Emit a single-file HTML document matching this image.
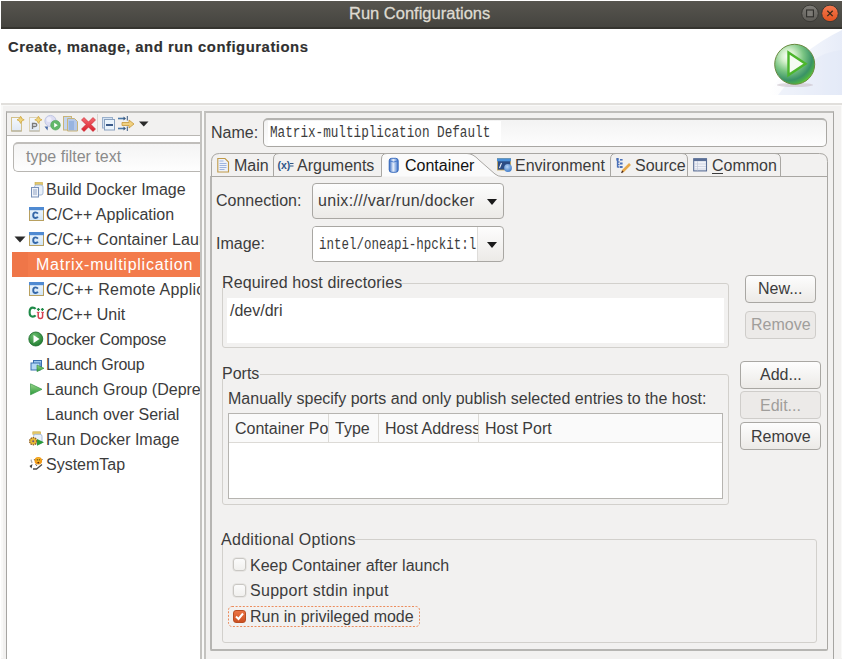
<!DOCTYPE html>
<html><head><meta charset="utf-8">
<style>
*{margin:0;padding:0;box-sizing:border-box}
html,body{width:843px;height:660px;overflow:hidden;background:#fff}
body{position:relative;font-family:"Liberation Sans",sans-serif;font-size:16px;color:#3c3c3c}
.a{position:absolute}
.t{position:absolute;white-space:pre;line-height:18px;height:18px}
.m{font-family:"Liberation Mono",monospace}
.hl{position:absolute;background:#c9c7c3}
.btn{position:absolute;border:1px solid #a9a7a3;border-radius:4px;background:linear-gradient(#fdfdfd,#eceae7)}
.dis{border-color:#cfcdca;background:#eceae8}
.grp{position:absolute;border:1px solid #d2d0cc;border-radius:3px}
.cb{position:absolute;width:13px;height:13px;border:1px solid #c9c7c3;border-radius:3px;background:linear-gradient(#fbfbfb,#f1f0ee);box-shadow:0 0 0 0.5px #dcdad6}
</style></head>
<body>
<div class="a" style="left:1px;top:1px;width:841px;height:658px;background:#f2f1f0"></div>
<div class="hl" style="left:1px;top:105px;width:2px;height:553px;background:#f9f9f8"></div>
<div class="hl" style="left:841px;top:105px;width:1px;height:553px;background:#f9f9f8"></div>

<!-- title bar -->
<div class="a" style="left:1px;top:1px;width:841px;height:28px;background:linear-gradient(#57554f,#45443f 92%,#35342f 92%)"></div>
<div class="t" style="left:349px;top:4px;color:#dfdbd2;font-size:16.5px;-webkit-text-stroke:0.3px #dfdbd2">Run Configurations</div>
<svg class="a" style="left:800px;top:3px" width="42" height="22" viewBox="0 0 42 22">
  <defs>
    <linearGradient id="gb" x1="0" y1="0" x2="0" y2="1"><stop offset="0" stop-color="#807e79"/><stop offset="1" stop-color="#5e5c57"/></linearGradient>
    <linearGradient id="rb" x1="0" y1="0" x2="0" y2="1"><stop offset="0" stop-color="#f47a52"/><stop offset="1" stop-color="#e2521e"/></linearGradient>
  </defs>
  <circle cx="10" cy="10.4" r="8.3" fill="url(#gb)" stroke="#3a3935" stroke-width="1"/>
  <rect x="6.6" y="7" width="6.8" height="6.8" fill="#7c7a75" stroke="#2f2e2b" stroke-width="1.1"/>
  <circle cx="30" cy="10.4" r="8.3" fill="url(#rb)" stroke="#3a3935" stroke-width="1"/>
  <path d="M27.3 7.7 L32.7 13.1 M32.7 7.7 L27.3 13.1" stroke="#3a2a1a" stroke-width="1.3"/>
</svg>

<!-- header -->
<div class="a" style="left:1px;top:29px;width:841px;height:74px;background:#fff"></div>
<div class="t" style="left:8px;top:38px;font-size:14px;font-weight:bold;color:#303030;-webkit-text-stroke:0.15px #303030;letter-spacing:0.5px;transform:scaleX(1.06);transform-origin:0 0">Create, manage, and run configurations</div>
<svg class="a" style="left:770px;top:30px" width="72" height="65" viewBox="0 0 72 65">
  <defs>
    <linearGradient id="bg1" x1="0" y1="0" x2="1" y2="0"><stop offset="0" stop-color="#fff"/><stop offset="1" stop-color="#dfe6f6"/></linearGradient>
    <radialGradient id="pg" cx="0.34" cy="0.3" r="0.75"><stop offset="0" stop-color="#ffffff"/><stop offset="0.22" stop-color="#d4f0cc"/><stop offset="0.5" stop-color="#7cc684"/><stop offset="0.8" stop-color="#3a9266"/><stop offset="0.93" stop-color="#4aae4a"/><stop offset="1" stop-color="#66cc30"/></radialGradient>
  </defs>
  <path d="M0 65 L0 60 Q30 20 72 0 L72 65 Z" fill="url(#bg1)" opacity="0.75"/>
  <path d="M8 65 Q40 22 72 20 L72 65 Z" fill="#dfe6f6" opacity="0.45"/>
  <ellipse cx="25" cy="55" rx="18" ry="2" fill="#c9c0c8" opacity="0.6"/>
  <circle cx="24.7" cy="34.3" r="20" fill="url(#pg)" stroke="#6a8a40" stroke-width="1"/>
  <path d="M18.5 22.5 L35.5 33.8 L18.5 45 Z" fill="#f4fbf2" stroke="#4cb62c" stroke-width="2.4" stroke-linejoin="miter"/>
</svg>
<div class="hl" style="left:1px;top:103px;width:841px;height:2px;background:#e1dfdc"></div>
<div class="hl" style="left:1px;top:105px;width:841px;height:1px;background:#f9f9f8"></div>

<!-- left panel -->
<div class="a" style="left:6px;top:111px;width:196px;height:548px;border-left:1px solid #a6a5a2;border-top:2px solid #c2c1be;border-right:2px solid #c4c3c0;background:#fff"></div>
<div class="hl" style="left:202px;top:111px;width:2px;height:548px;background:#f9f9f8"></div>
<div class="a" style="left:7px;top:113px;width:193px;height:22px;background:#f2f1f0"></div>
<div class="hl" style="left:7px;top:135px;width:193px;height:1px;background:#b9b7b3"></div>
<div class="a" style="left:13px;top:142px;width:187px;height:30px;border:1px solid #b8b6b2;border-top:2px solid #c0bebb;border-right:none;border-radius:5px 0 0 5px;background:linear-gradient(#f4f4f4,#fefefe)"></div>
<div class="t" style="left:26px;top:148px;color:#8b8b8b">type filter text</div>

<!-- tree -->
<div class="a" style="left:12px;top:252px;width:188px;height:25px;background:#f37b4c"></div>
<div class="a" style="left:12px;top:252px;width:16px;height:25px;background:#ef7648"></div>
<div class="t" style="left:46px;top:181px">Build Docker Image</div>
<div class="t" style="left:46px;top:206px">C/C++ Application</div>
<div class="a" style="left:7px;top:228px;width:193px;height:25px;overflow:hidden"><div class="t" style="left:39px;top:3px;letter-spacing:0.1px">C/C++ Container Launcher</div></div>
<div class="t" style="left:36px;top:256px;color:#fff;letter-spacing:0.75px">Matrix-multiplication</div>
<div class="a" style="left:7px;top:278px;width:193px;height:25px;overflow:hidden"><div class="t" style="left:39px;top:3px;letter-spacing:0.25px">C/C++ Remote Application</div></div>
<div class="t" style="left:46px;top:306px">C/C++ Unit</div>
<div class="t" style="left:46px;top:331px;letter-spacing:-0.25px">Docker Compose</div>
<div class="t" style="left:46px;top:356px;letter-spacing:-0.25px">Launch Group</div>
<div class="a" style="left:7px;top:378px;width:193px;height:25px;overflow:hidden"><div class="t" style="left:39px;top:3px;letter-spacing:0px">Launch Group (Deprecated)</div></div>
<div class="t" style="left:46px;top:406px">Launch over Serial</div>
<div class="t" style="left:46px;top:431px">Run Docker Image</div>
<div class="t" style="left:46px;top:456px">SystemTap</div>

<!-- right panel -->
<div class="a" style="left:204px;top:111px;width:630px;height:548px;border-left:2px solid #c4c3c0;border-top:2px solid #bfbebb;border-right:1px solid #a6a5a2;background:#f2f1f0"></div>
<div class="t" style="left:211px;top:124px">Name:</div>
<div class="a" style="left:263px;top:118px;width:564px;height:29px;border:1px solid #a9a7a3;border-top:2px solid #b4b3b0;border-radius:5px;background:linear-gradient(#f3f3f3,#fdfdfd)"></div>
<div class="a" style="left:268px;top:121px;width:233px;height:24px;background:#fff"></div>
<div class="t m" style="left:270px;top:124px;font-size:16px;color:#3c3c3c;transform:scaleX(0.791);transform-origin:0 0">Matrix-multiplication Default</div>

<!-- tab folder -->
<div class="a" style="left:210px;top:176px;width:618px;height:475px;border:1px solid #a9a7a3;border-left:2px solid #b6b5b2;border-bottom:2px solid #b6b5b2;border-top:none;border-radius:0 0 2px 2px"></div>
<svg class="a" style="left:205px;top:148px" width="628" height="36" viewBox="0 0 628 36">
  <!-- strip outline -->
  <path d="M6.5 28.5 L6.5 13.5 Q6.5 5.5 14.5 5.5 L614.5 5.5 Q622.5 5.5 622.5 13.5 L622.5 28.5" fill="none" stroke="#a9a7a3"/>
  <!-- bottom line (excluding selected) -->
  <path d="M6.5 28.5 L176.5 28.5 M296 28.5 L622.5 28.5" fill="none" stroke="#a9a7a3"/>
  <!-- selected tab fill -->
  <path d="M176.5 28.5 L176.5 11 Q176.5 5.5 182 5.5 L262 5.5 Q268 5.5 274 12 L290 26 Q293 28.5 297 28.5 Z" fill="#fbfbfb"/>
  <path d="M176.5 28.5 L176.5 11 Q176.5 5.5 182 5.5 L262 5.5 Q268 5.5 274 12 L290 26 Q293 28.5 297 28.5" fill="none" stroke="#a9a7a3"/>
  <!-- separators -->
  <path d="M68.5 28.5 L68.5 11 Q68.5 5.5 74 5.5" fill="none" stroke="#a9a7a3"/>
  <path d="M405.5 28.5 L405.5 11 Q405.5 5.5 411 5.5" fill="none" stroke="#a9a7a3"/>
  <path d="M482.5 28.5 L482.5 11 Q482.5 5.5 477 5.5" fill="none" stroke="#a9a7a3"/>
  <path d="M575.5 28.5 L575.5 11 Q575.5 5.5 570 5.5" fill="none" stroke="#a9a7a3"/>
</svg>
<div class="t" style="left:234px;top:157px">Main</div>
<div class="t" style="left:297px;top:157px">Arguments</div>
<div class="t" style="left:405px;top:157px;color:#111">Container</div>
<div class="t" style="left:515px;top:157px">Environment</div>
<div class="t" style="left:635px;top:157px">Source</div>
<div class="t" style="left:712px;top:157px">Common</div>
<div class="hl" style="left:712px;top:173px;width:11px;height:1px;background:#3c3c3c"></div>

<!-- connection / image -->
<div class="t" style="left:216px;top:192px">Connection:</div>
<div class="btn" style="left:312px;top:183px;width:192px;height:36px"></div>
<div class="t" style="left:318px;top:192px;letter-spacing:0.33px">unix:///var/run/docker</div>
<svg class="a" style="left:487px;top:199px" width="10" height="6"><path d="M0 0 L10 0 L5 6 Z" fill="#1a1a1a"/></svg>
<div class="t" style="left:216px;top:235px">Image:</div>
<div class="btn" style="left:312px;top:226px;width:192px;height:36px"></div>
<div class="a" style="left:313px;top:227px;width:165px;height:34px;background:#fff;border-radius:3px 0 0 3px"></div>
<div class="hl" style="left:477px;top:227px;width:1px;height:34px;background:#dedcd9"></div>
<div class="t m" style="left:319px;top:236px;font-size:16px;transform:scaleX(0.78);transform-origin:0 0">intel/oneapi-hpckit:l</div>
<svg class="a" style="left:487px;top:242px" width="10" height="6"><path d="M0 0 L10 0 L5 6 Z" fill="#1a1a1a"/></svg>

<!-- required host dirs -->
<div class="grp" style="left:222px;top:283px;width:507px;height:65px"></div>
<div class="a" style="left:221px;top:272px;width:180px;height:16px;background:#f2f1f0"></div>
<div class="t" style="left:222px;top:274px;letter-spacing:0.1px">Required host directories</div>
<div class="a" style="left:227px;top:298px;width:497px;height:45px;background:#fff"></div>
<div class="t" style="left:230px;top:302px">/dev/dri</div>
<div class="btn" style="left:745px;top:275px;width:71px;height:28px"></div>
<div class="t" style="left:758px;top:280px">New...</div>
<div class="btn dis" style="left:745px;top:311px;width:71px;height:28px"></div>
<div class="t" style="left:751px;top:316px;color:#a09e9b">Remove</div>

<!-- ports -->
<div class="grp" style="left:222px;top:374px;width:507px;height:131px"></div>
<div class="a" style="left:221px;top:363px;width:39px;height:16px;background:#f2f1f0"></div>
<div class="t" style="left:222px;top:365px">Ports</div>
<div class="t" style="left:228px;top:390px">Manually specify ports and only publish selected entries to the host:</div>
<div class="a" style="left:228px;top:413px;width:495px;height:86px;border:1px solid #b6b4b0;background:#fff"></div>
<div class="a" style="left:229px;top:414px;width:493px;height:29px;background:#fafafa"></div>
<div class="hl" style="left:229px;top:442px;width:493px;height:1px;background:#dcdad6"></div>
<div class="hl" style="left:328px;top:414px;width:1px;height:29px;background:#dcdad6"></div>
<div class="hl" style="left:378px;top:414px;width:1px;height:29px;background:#dcdad6"></div>
<div class="hl" style="left:478px;top:414px;width:1px;height:29px;background:#dcdad6"></div>
<div class="a" style="left:229px;top:415px;width:99px;height:29px;overflow:hidden"><div class="t" style="left:6px;top:5px">Container Port</div></div>
<div class="t" style="left:335px;top:420px">Type</div>
<div class="a" style="left:379px;top:415px;width:99px;height:29px;overflow:hidden"><div class="t" style="left:6px;top:5px">Host Address</div></div>
<div class="t" style="left:485px;top:420px">Host Port</div>
<div class="btn" style="left:740px;top:361px;width:81px;height:28px"></div>
<div class="t" style="left:760px;top:366px">Add...</div>
<div class="btn dis" style="left:740px;top:391px;width:81px;height:28px"></div>
<div class="t" style="left:760px;top:397px;color:#a09e9b">Edit...</div>
<div class="btn" style="left:740px;top:422px;width:81px;height:28px"></div>
<div class="t" style="left:751px;top:428px">Remove</div>

<!-- additional options -->
<div class="grp" style="left:222px;top:539px;width:595px;height:104px"></div>
<div class="a" style="left:221px;top:528px;width:134px;height:16px;background:#f2f1f0"></div>
<div class="t" style="left:221px;top:531px;letter-spacing:0.28px">Additional Options</div>
<div class="cb" style="left:233px;top:558px"></div>
<div class="t" style="left:250px;top:557px">Keep Container after launch</div>
<div class="cb" style="left:233px;top:584px"></div>
<div class="t" style="left:250px;top:582px;letter-spacing:0.28px">Support stdin input</div>
<svg class="a" style="left:227px;top:605px" width="194" height="23"><rect x="1.5" y="1.5" width="191" height="20" rx="3.5" fill="none" stroke="#ec8c5c" stroke-width="1" stroke-dasharray="2 1.6"/></svg>
<div class="cb" style="left:233px;top:610px;background:linear-gradient(#ec7444,#cc5022);border-color:#b84c22;box-shadow:none"></div>
<svg class="a" style="left:233px;top:610px" width="13" height="13"><path d="M3 6.5 L5.5 9 L10 3.5" fill="none" stroke="#fff" stroke-width="2"/></svg>
<div class="t" style="left:250px;top:608px">Run in privileged mode</div>

<!-- ICONS -->
<svg class="a" style="left:0;top:0" width="843" height="660" viewBox="0 0 843 660">
<defs>
 <linearGradient id="pgF" x1="0" y1="0" x2="0" y2="1"><stop offset="0" stop-color="#f4f8fc"/><stop offset="1" stop-color="#dfe8f4"/></linearGradient>
 <linearGradient id="winF" x1="0" y1="0" x2="0" y2="1"><stop offset="0" stop-color="#f0f8ff"/><stop offset="1" stop-color="#cfe4f6"/></linearGradient>
 <linearGradient id="redX" x1="0" y1="0" x2="0" y2="1"><stop offset="0" stop-color="#f46a70"/><stop offset="1" stop-color="#d8202c"/></linearGradient>
 <linearGradient id="grT" x1="0" y1="0" x2="0" y2="1"><stop offset="0" stop-color="#9ad48a"/><stop offset="1" stop-color="#2a9a3a"/></linearGradient>
 <linearGradient id="cyl" x1="0" y1="0" x2="1" y2="0"><stop offset="0" stop-color="#3066c0"/><stop offset="0.45" stop-color="#e8f0fc"/><stop offset="1" stop-color="#3a70c8"/></linearGradient>
 <radialGradient id="ball" cx="0.4" cy="0.35" r="0.7"><stop offset="0" stop-color="#b8d4f4"/><stop offset="1" stop-color="#3a78c8"/></radialGradient>
 <radialGradient id="dcG" cx="0.4" cy="0.3" r="0.75"><stop offset="0" stop-color="#6cc070"/><stop offset="1" stop-color="#1e7a2e"/></radialGradient>
</defs>
<!-- toolbar -->
<g>
 <!-- new doc -->
 <rect x="11.5" y="117.5" width="10" height="13.5" fill="url(#pgF)" stroke="#d2c08a"/>
 <path d="M11.5 131 L21.5 131" stroke="#a8a89a"/>
 <path d="M20.6 116.2 Q21.2 119.2 24.2 119.8 Q21.2 120.4 20.6 123.4 Q20 120.4 17 119.8 Q20 119.2 20.6 116.2 Z" fill="#f0d478" stroke="#d4ae50" stroke-width="0.9"/>
 <!-- P doc -->
 <rect x="29.5" y="117.5" width="10" height="13.5" fill="url(#pgF)" stroke="#dcd2b4"/>
 <path d="M29.5 131 L39.5 131" stroke="#b0b0a8"/>
 <path d="M32.5 129 L32.5 123.5 L35 123.5 Q36.8 123.5 36.8 125 Q36.8 126.5 35 126.5 L32.5 126.5" fill="none" stroke="#7a7a7a" stroke-width="1.3"/>
 <path d="M38.4 116.2 Q39 119.2 42 119.8 Q39 120.4 38.4 123.4 Q37.8 120.4 34.8 119.8 Q37.8 119.2 38.4 116.2 Z" fill="#f0d478" stroke="#d4ae50" stroke-width="0.9"/>
 <!-- globe run -->
 <circle cx="50.5" cy="121" r="5.6" fill="#dcdcf2" stroke="#c0c8e4" stroke-width="1"/>
 <circle cx="49" cy="119.5" r="2.5" fill="#eeeefa"/>
 <path d="M44.5 126.5 L48 126.5 L47.5 130.5 Z" fill="#4a6aa8"/>
 <circle cx="55.5" cy="125.2" r="4.8" fill="#62b86a" stroke="#4aa052" stroke-width="0.6"/>
 <path d="M54.2 122.8 L57.8 125.2 L54.2 127.6 Z" fill="#fff"/>
 <!-- copy -->
 <rect x="63.5" y="116.5" width="8" height="13.5" fill="#c4d4ee" stroke="#c8b478"/>
 <path d="M67.5 118.5 L74.5 118.5 L77.5 121.5 L77.5 131 L67.5 131 Z" fill="#b4c8ea" stroke="#c8b478"/>
 <rect x="69" y="121" width="5" height="9" fill="#98b4e0"/>
 <!-- red x -->
 <path d="M84 117.5 L88.5 122 L93 117.5 L95.5 120 L91 124.5 L95.5 129 L93 131.5 L88.5 127 L84 131.5 L81.5 129 L86 124.5 L81.5 120 Z" fill="url(#redX)" stroke="#c81e28" stroke-width="0.6"/>
 <!-- separator -->
 <path d="M97.5 114 L97.5 132" stroke="#d8d6d2"/>
 <!-- collapse -->
 <rect x="102.5" y="117.5" width="10" height="10.5" fill="#d4e2f2" stroke="#9ab0cc"/>
 <rect x="104.5" y="119.5" width="10" height="10.5" fill="#eaf4fc" stroke="#8aa2c0"/>
 <rect x="106" y="124" width="7" height="2" fill="#3a5a88"/>
 <!-- filter arrows -->
 <path d="M118 118.5 L124.5 118.5" stroke="#4a78a8" stroke-width="1.6"/><path d="M123.5 116.5 L126 118.5 L123.5 120.5 Z" fill="#3a5a80"/>
 <path d="M118 128.5 L124.5 128.5" stroke="#4a78a8" stroke-width="1.6"/><path d="M123.5 126.5 L126 128.5 L123.5 130.5 Z" fill="#3a5a80"/>
 <path d="M127.3 116 L127.3 120.5 M127.3 126.5 L127.3 131" stroke="#3a5a80" stroke-width="1"/>
 <path d="M122 122.5 L129 122.5 L129 120 L134 124 L129 128 L129 125.5 L122 125.5 Z" fill="#f0d080" stroke="#c89838" stroke-width="0.8"/>
 <!-- dropdown -->
 <path d="M139 121.5 L148.5 121.5 L143.75 126.5 Z" fill="#2a2a2a"/>
</g>
<!-- tree icons -->
<g>
 <!-- build docker image: jar + doc -->
 <rect x="35" y="182.5" width="7.5" height="2.5" fill="#e4c868" stroke="#c8a848" stroke-width="0.6"/>
 <rect x="34.5" y="185" width="8.5" height="10" rx="2" fill="#e8f0fa" stroke="#a8bcd8"/>
 <rect x="31.5" y="187.5" width="7" height="9.5" fill="#f0f4fa" stroke="#7890b8"/>
 <path d="M33 190 L37 190 M33 192 L37 192 M33 194 L37 194" stroke="#7890b8" stroke-width="0.8"/>
 <!-- ▼ expand -->
 <path d="M14.5 236.5 L25.5 236.5 L20 242.5 Z" fill="#2a2a2a"/>
</g>
<g id="cwin">
 <rect x="29.5" y="207.5" width="14" height="13" fill="url(#winF)" stroke="#b8a060"/>
 <rect x="29" y="207" width="15" height="3.2" fill="#4f8ad2"/>
 <path d="M37.9 213.6 Q37 212.4 35.6 212.4 Q33.2 212.4 33.2 215.2 Q33.2 218 35.6 218 Q37 218 37.9 216.8" fill="none" stroke="#3467a8" stroke-width="1.9"/>
</g>
<use href="#cwin" x="0" y="25"/>
<use href="#cwin" x="0" y="75"/>
<!-- c/c++ unit -->
<path d="M35.6 308.8 Q34.6 307.6 32.8 307.6 Q29.6 307.6 29.6 312.2 Q29.6 316.6 32.8 316.6 Q34.6 316.6 35.6 315.4" fill="none" stroke="#1f8a48" stroke-width="2.1"/>
<path d="M36.9 309.4 L39.9 309.4 M38.4 307.9 L38.4 310.9 M40.9 309.4 L43.9 309.4 M42.4 307.9 L42.4 310.9" stroke="#1f8a48" stroke-width="1.2"/>
<path d="M36.8 312.3 L39.6 312.3 M41.2 312.3 L44 312.3" stroke="#d84050" stroke-width="1"/>
<path d="M38.2 312.3 L38.2 316.2 Q38.2 318.5 40.4 318.5 Q42.6 318.5 42.6 316.2 L42.6 312.3" fill="none" stroke="#d84050" stroke-width="1.5"/>
<!-- docker compose -->
<circle cx="35.8" cy="339" r="7" fill="url(#dcG)" stroke="#1a6a2a" stroke-width="0.8"/>
<path d="M33.5 335 L39.5 339 L33.5 343 Z" fill="#fff"/>
<!-- launch group -->
<rect x="33.5" y="360.5" width="8" height="6.5" fill="#9cc8ee" stroke="#3a70b0"/>
<rect x="31" y="363" width="9" height="7" fill="#b4d8f4" stroke="#3a70b0"/>
<path d="M37 365 L44 368.3 L37 371.6 Z" fill="url(#grT)" stroke="#2a8a3a" stroke-width="0.6"/>
<!-- launch group deprecated -->
<path d="M30.5 383.8 L42 389.3 L30.5 394.8 Z" fill="url(#grT)" stroke="#3a9a48" stroke-width="0.7"/>
<!-- run docker image -->
<rect x="32.8" y="431.8" width="7.8" height="2.5" fill="#e4c868" stroke="#c8a848" stroke-width="0.6"/>
<rect x="33.5" y="434.3" width="8.5" height="9.5" rx="2" fill="#e8f0fa" stroke="#a8bcd8"/>
<circle cx="33.2" cy="441.2" r="3.6" fill="#e8b838" stroke="#8a5a28" stroke-width="1.2" stroke-dasharray="1.4 0.9"/>
<circle cx="33.2" cy="441.2" r="1" fill="#6a5a7a"/>
<path d="M37 439 L44 442.3 L37 445.7 Z" fill="#2a9a3a"/>
<!-- systemtap -->
<path d="M29.5 466 L31.5 468.5 L32.5 464 Z" fill="#3a3a3a"/>
<path d="M31 459.5 L32 463" stroke="#b0b0b0" stroke-width="1.2"/>
<path d="M33 469 L36.5 469 L42 464.5" fill="none" stroke="#4a4a4a" stroke-width="1.3"/>
<path d="M34 459 L35.5 461 M42.5 459 L41 461 M35.5 464 L37 466" stroke="#6a6a6a" stroke-width="1"/>
<circle cx="38.3" cy="460.8" r="3.8" fill="#f29a18"/>
<circle cx="38.3" cy="460" r="2.2" fill="#f8c030" opacity="0.8"/>
<path d="M37.3 459 L37.3 460.6 M39.3 459 L39.3 460.6" stroke="#6a4a10" stroke-width="0.9"/>
<circle cx="38.3" cy="462.6" r="0.9" fill="#5a2a08"/>
<!-- tab icons -->
<g>
 <path d="M217.8 158.5 L225 158.5 L228.5 162 L228.5 172 L217.8 172 Z" fill="#eef2fa" stroke="#c09a48" stroke-width="1.1"/>
 <path d="M219.5 161 L223.5 161 M219.5 163.5 L226.5 163.5 M219.5 165.5 L226.5 165.5 M219.5 167.5 L226.5 167.5 M219.5 169.5 L224.5 169.5" stroke="#8aa4d8" stroke-width="0.8"/>
 <!-- arguments (x)= -->
 <text x="277.5" y="169" font-family="Liberation Sans" font-weight="bold" font-size="10.5" fill="#2f5686">(x)</text>
 <path d="M290 163.5 L293.5 163.5 M290 166 L293.5 166" stroke="#2f5686" stroke-width="1.1"/>
 <!-- container cylinder -->
 <rect x="389.2" y="158.3" width="9" height="14" rx="2.5" fill="url(#cyl)" stroke="#2e62b8" stroke-width="0.9"/>
 <path d="M390 161 Q393.7 163 397.5 161" fill="none" stroke="#3a70c8" stroke-width="0.8"/>
 <!-- environment -->
 <rect x="497.5" y="158.5" width="13" height="11.5" fill="#2c4c84" stroke="#c8a858" stroke-width="0.8"/>
 <rect x="497" y="158.3" width="14" height="3" fill="#4a90d8"/>
 <path d="M499.5 168 L501.5 163" stroke="#e8f0fa" stroke-width="1.1"/>
 <circle cx="508" cy="168" r="3.9" fill="url(#ball)"/>
 <!-- source -->
 <path d="M617.5 159 L617.5 167.5 M617.5 162 L619.5 162 M617.5 164.5 L619.5 164.5 M617.5 167 L619.5 167" stroke="#4a70b8" stroke-width="1.3"/>
 <rect x="616.3" y="158" width="2.4" height="2.6" fill="#4a70b8"/>
 <rect x="620" y="159" width="2.6" height="1.6" fill="#4a70b8"/>
 <rect x="620" y="162.5" width="2.6" height="2" fill="#4a70b8"/>
 <rect x="620" y="166" width="2.6" height="2" fill="#4a70b8"/>
 <path d="M622.5 171.5 L630 164" stroke="#e8a848" stroke-width="2.6" stroke-linecap="butt"/>
 <path d="M621.5 172.8 L623 171" stroke="#4a2a1a" stroke-width="1.4"/>
 <!-- common -->
 <rect x="693.7" y="158.7" width="12.8" height="12.2" fill="#f0f2f8" stroke="#5a6e96" stroke-width="1.1"/>
 <rect x="693.7" y="158.7" width="12.8" height="2.4" fill="#5a6e96"/>
 <path d="M697.5 161 L697.5 170.5 M694 164 L706 164 M694 166.5 L706 166.5 M694 169 L706 169" stroke="#c4cada" stroke-width="0.7"/>
</g>
</svg>

</body></html>
